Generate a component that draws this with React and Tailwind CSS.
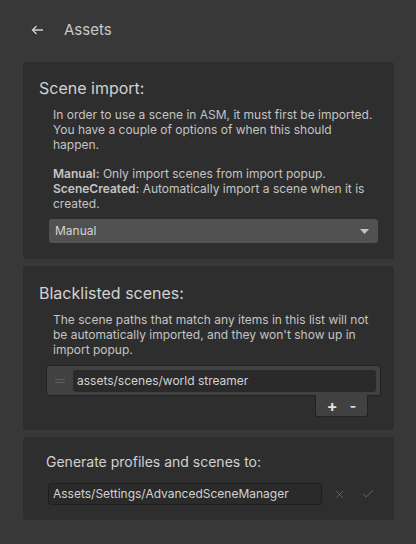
import { Check, X } from "lucide-react";

const Panel = ({ className = "", children }) => (
  <div className={`rounded-[3px] bg-[#2e2e2e] ${className}`}>{children}</div>
);

const Heading = ({ className = "", children }) => (
  <h2 className={`leading-5 text-[#d2d2d2] ${className}`}>{children}</h2>
);

export default function App() {
  return (
    <div
      className="w-[416px] h-[544px] bg-[#383838] flex flex-col overflow-hidden"
      style={{ fontFamily: "Inter, 'Noto Sans', sans-serif" }}
    >
      {/* Header */}
      <div className="h-[62px] flex items-start pt-[20px] pl-[31px]">
        <div className="flex items-center h-5 gap-[20px]">
          <svg width="13" height="10" viewBox="0 0 13 10" fill="none">
            <path d="M12 5H1.5M5.5 1L1.5 5L5.5 9" stroke="#d0d0d0" strokeWidth="1.3" />
          </svg>
          <span className="text-[15px] text-[#c8c8c8]">Assets</span>
        </div>
      </div>

      <div className="flex flex-col gap-[7px] px-[23px] pr-[22px]">
        {/* Scene import */}
        <Panel className="pt-[16px] pb-[16px]">
          <Heading className="pl-[16px] text-[16px]">Scene import:</Heading>
          <div className="mt-[9px] pl-[30px] pr-[14px] text-[12px] leading-[15px] text-[#c4c4c4]">
            <p>
              In order to use a scene in ASM, it must first be imported. You have a couple of options of when this
              should happen.
            </p>
            <p className="mt-[14px]">
              <span className="font-semibold">Manual:</span> Only import scenes from import popup.
            </p>
            <p>
              <span className="font-semibold">SceneCreated:</span> Automatically import a scene when it is created.
            </p>
          </div>
          <div className="mt-[8px] ml-[26px] mr-[16px] h-6 rounded-[3px] bg-[#515151] flex items-center justify-between pl-[6px] pr-[9px]">
            <span className="text-[12px] text-[#d2d2d2]">Manual</span>
            <svg width="9" height="5" viewBox="0 0 9 5">
              <path d="M0 0H9L4.5 5Z" fill="#c4c4c4" />
            </svg>
          </div>
        </Panel>

        {/* Blacklisted scenes */}
        <Panel className="pt-[17px] pb-[13px]">
          <Heading className="pl-[16px] text-[16px]">Blacklisted scenes:</Heading>
          <p className="mt-[9px] pl-[30px] pr-[14px] text-[12px] leading-[15px] text-[#c4c4c4]">
            The scene paths that match any items in this list will not be automatically imported, and they won't show
            up in import popup.
          </p>
          <div className="mt-[8px] ml-[23px] mr-[13px] flex flex-col items-end">
            <div className="w-full h-[31px] rounded-[3px] border border-[#232323] bg-[#414141] flex items-center pl-[8px] pr-[4px] gap-[8px]">
              <div className="flex flex-col gap-[2px] w-[10px]">
                <div className="h-px bg-[#5e5e5e]" />
                <div className="h-px bg-[#5e5e5e]" />
              </div>
              <div className="flex-1 h-[22px] rounded-[3px] bg-[#2a2a2a] flex items-center pl-[4px] text-[12px] text-[#d2d2d2]">
                assets/scenes/world streamer
              </div>
            </div>
            <div className="mr-[13px] -mt-px w-[53px] h-[22px] rounded-b-[3px] border border-t-0 border-[#232323] bg-[#414141] flex items-center justify-center gap-[12px] text-[#e0e0e0]">
              <span className="text-[16px] font-bold leading-none">+</span>
              <span className="text-[14px] font-bold leading-none">-</span>
            </div>
          </div>
        </Panel>

        {/* Generate profiles */}
        <Panel className="pt-[15px] pb-[15px]">
          <Heading className="pl-[23px] text-[14px]">Generate profiles and scenes to:</Heading>
          <div className="mt-[11px] pl-[25px] flex items-center">
            <div className="w-[274px] h-[22px] rounded-[3px] border border-[#1f1f1f] bg-[#2a2a2a] flex items-center pl-[4px] text-[12px] text-[#d2d2d2]">
              Assets/Settings/AdvancedSceneManager
            </div>
            <X className="ml-[11px] text-[#6a6a6a]" size={13} strokeWidth={1.6} />
            <Check className="ml-[15px] text-[#6a6a6a]" size={14} strokeWidth={1.6} />
          </div>
        </Panel>
      </div>
    </div>
  );
}
